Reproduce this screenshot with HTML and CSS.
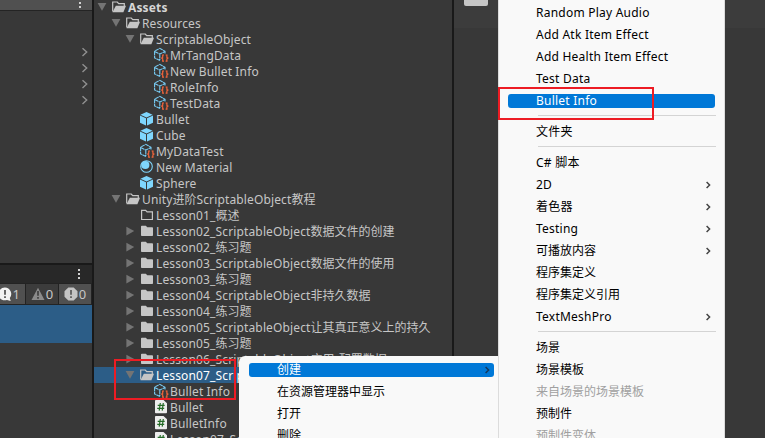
FILE: index.html
```
<!DOCTYPE html>
<html lang="zh-CN">
<head>
<meta charset="utf-8">
<title>Unity</title>
<link rel="stylesheet" href="styles.css">
</head>
<body>
<svg class="defs" aria-hidden="true">
  <symbol id="open" viewBox="0 0 16 16"><path d="M1.7 12.5V3h4.6l1.4 1.7h5.6V7" fill="none" stroke="currentColor" stroke-width="1.2"/><path d="M1.5 13.2 4.8 6.8H15l-2.6 6.4z" fill="currentColor"/></symbol>
  <symbol id="folder" viewBox="0 0 16 16"><path d="M2 3.5q0-.8.8-.8h4l1.5 1.6h4.9q.8 0 .8.8v7.1q0 .8-.8.8H2.8q-.8 0-.8-.8z" fill="currentColor"/></symbol>
  <symbol id="empty" viewBox="0 0 16 16"><path d="M2.6 3.3h4l1.5 1.6h5.3v7.6H2.6z" fill="none" stroke="currentColor" stroke-width="1.2"/></symbol>
  <symbol id="asset" viewBox="0 0 16 16"><path d="M7 13.4 1.6 11V4.2L6.8 1.3 12 4.2V7M1.6 4.4l5.2 2.7L12 4.4M6.8 7.1v6" fill="none" stroke="#78cbf3" stroke-width="1.1" stroke-dasharray="4 .5"/><path d="M11 8H9.7v2.4L8.7 11l1 .7v2.5H11M12.6 8h1.3v2.4l1 .6-1 .7v2.5h-1.3" fill="none" stroke="#f4653b" stroke-width="1.2"/></symbol>
  <symbol id="cube" viewBox="0 0 16 16"><path d="m7.5 1 6.1 2.7-6.1 2.8-6.1-2.8zM1 4.6l6 2.7v7.2l-6-2.8zM14 4.6 8 7.3v7.2l6-2.8z" fill="#7fd6fd"/></symbol>
  <symbol id="ball" viewBox="0 0 16 16"><circle cx="7.5" cy="7.5" r="5.8" fill="none" stroke="#7fd6fd" stroke-width="1.1"/><circle cx="6.3" cy="6" r="4.1" fill="#7fd6fd"/></symbol>
  <symbol id="script" viewBox="0 0 16 16"><path d="M2.8 1h7.7L14 4.3v9q0 .9-.9.9H2.8q-.8 0-.8-.9V1.9q0-.9.8-.9z" fill="#ededed"/><path d="M7.3 4 6.2 11.6M10.3 4 9.2 11.6M4.7 6.3h7M4.2 9.3h7" stroke="#246b27" stroke-width="1.2"/></symbol>
  <symbol id="down" viewBox="0 0 10 10"><path d="M.6 1h8.8L5 8.8z" fill="currentColor"/></symbol>
  <symbol id="right" viewBox="0 0 10 10"><path d="M1.4.8v8.6L9.2 5.1z" fill="currentColor"/></symbol>
  <symbol id="chev" viewBox="0 0 8 10"><path d="m1.5 1.2 4.2 3.9-4.2 3.9" fill="none" stroke="currentColor" stroke-width="1.4"/></symbol>
  <symbol id="more" viewBox="0 0 8 10"><path d="M2.6 2 5.6 5 2.6 8" fill="none" stroke="currentColor" stroke-width="1.5"/></symbol>
</svg>
<div class="app">
  <aside class="side">
    <div class="side-head"><i class="dots"></i></div>
    <div class="inspector">
      <svg><use href="#chev"/></svg><svg><use href="#chev"/></svg><svg><use href="#chev"/></svg><svg><use href="#chev"/></svg>
    </div>
    <div class="console-head"><i class="dots"></i></div>
    <div class="console-bar">
      <span class="on first"><svg viewBox="0 0 14 14"><path d="M7 .5a6.4 6.4 0 1 0 2 12.4l3.7 1-.9-3A6.4 6.4 0 0 0 7 .5z" fill="#f2f2f2"/><path d="M7 3v4.8M7 9.2V11" stroke="#444" stroke-width="1.6"/></svg>1</span>
      <span><svg viewBox="0 0 14 14"><path d="M7 .8 13.5 13H.5z" fill="#8b8b8b"/><path d="M7 4v4.7M7 10v1.7" stroke="#3c3c3c" stroke-width="1.6"/></svg>0</span>
      <span class="on"><svg viewBox="0 0 14 14"><path d="M4.3.5h5.4l3.8 3.8v5.4l-3.8 3.8H4.3L.5 9.7V4.3z" fill="#c4c4c4"/><path d="M7 3v4.8M7 9.2V11" stroke="#505050" stroke-width="1.6"/></svg>0</span>
    </div>
    <div class="log"></div>
  </aside>
  <main class="tree">
    <div class="row d0 bold"><svg class="arr"><use href="#down"/></svg><svg class="ico"><use href="#open"/></svg><span>Assets</span></div>
    <div class="row d1"><svg class="arr"><use href="#down"/></svg><svg class="ico"><use href="#open"/></svg><span>Resources</span></div>
    <div class="row d2"><svg class="arr"><use href="#down"/></svg><svg class="ico"><use href="#open"/></svg><span>ScriptableObject</span></div>
    <div class="row d3"><i class="arr"></i><svg class="ico"><use href="#asset"/></svg><span>MrTangData</span></div>
    <div class="row d3"><i class="arr"></i><svg class="ico"><use href="#asset"/></svg><span>New Bullet Info</span></div>
    <div class="row d3"><i class="arr"></i><svg class="ico"><use href="#asset"/></svg><span>RoleInfo</span></div>
    <div class="row d3"><i class="arr"></i><svg class="ico"><use href="#asset"/></svg><span>TestData</span></div>
    <div class="row d2"><i class="arr"></i><svg class="ico"><use href="#cube"/></svg><span>Bullet</span></div>
    <div class="row d2"><i class="arr"></i><svg class="ico"><use href="#cube"/></svg><span>Cube</span></div>
    <div class="row d2"><i class="arr"></i><svg class="ico"><use href="#asset"/></svg><span>MyDataTest</span></div>
    <div class="row d2"><i class="arr"></i><svg class="ico"><use href="#ball"/></svg><span>New Material</span></div>
    <div class="row d2"><i class="arr"></i><svg class="ico"><use href="#cube"/></svg><span>Sphere</span></div>
    <div class="row d1"><svg class="arr"><use href="#down"/></svg><svg class="ico"><use href="#open"/></svg><span>Unity<b>进阶</b>ScriptableObject<b>教程</b></span></div>
    <div class="row d2"><i class="arr"></i><svg class="ico"><use href="#empty"/></svg><span>Lesson01_<b>概述</b></span></div>
    <div class="row d2"><svg class="arr"><use href="#right"/></svg><svg class="ico"><use href="#folder"/></svg><span>Lesson02_ScriptableObject<b>数据文件的创建</b></span></div>
    <div class="row d2"><svg class="arr"><use href="#right"/></svg><svg class="ico"><use href="#folder"/></svg><span>Lesson02_<b>练习题</b></span></div>
    <div class="row d2"><svg class="arr"><use href="#right"/></svg><svg class="ico"><use href="#folder"/></svg><span>Lesson03_ScriptableObject<b>数据文件的使用</b></span></div>
    <div class="row d2"><svg class="arr"><use href="#right"/></svg><svg class="ico"><use href="#folder"/></svg><span>Lesson03_<b>练习题</b></span></div>
    <div class="row d2"><svg class="arr"><use href="#right"/></svg><svg class="ico"><use href="#folder"/></svg><span>Lesson04_ScriptableObject<b>非持久数据</b></span></div>
    <div class="row d2"><svg class="arr"><use href="#right"/></svg><svg class="ico"><use href="#folder"/></svg><span>Lesson04_<b>练习题</b></span></div>
    <div class="row d2"><svg class="arr"><use href="#right"/></svg><svg class="ico"><use href="#folder"/></svg><span>Lesson05_ScriptableObject<b>让其真正意义上的持久</b></span></div>
    <div class="row d2"><svg class="arr"><use href="#right"/></svg><svg class="ico"><use href="#folder"/></svg><span>Lesson05_<b>练习题</b></span></div>
    <div class="row d2"><svg class="arr"><use href="#right"/></svg><svg class="ico"><use href="#folder"/></svg><span>Lesson06_ScriptableObject<b>应用</b>-<b>配置数据</b></span></div>
    <div class="row d2 sel"><svg class="arr"><use href="#down"/></svg><svg class="ico"><use href="#open"/></svg><span>Lesson07_Scrip</span></div>
    <div class="row d3"><i class="arr"></i><svg class="ico"><use href="#asset"/></svg><span>Bullet Info</span></div>
    <div class="row d3"><i class="arr"></i><svg class="ico"><use href="#script"/></svg><span>Bullet</span></div>
    <div class="row d3"><i class="arr"></i><svg class="ico"><use href="#script"/></svg><span>BulletInfo</span></div>
    <div class="row d3"><i class="arr"></i><svg class="ico"><use href="#script"/></svg><span>Lesson07_Scr</span></div>
  </main>
  <section class="view"><div class="view-head"><i class="chip"></i></div></section>
</div>
<div class="menu context">
  <div class="item hot">创建<svg><use href="#more"/></svg></div>
  <div class="item">在资源管理器中显示</div>
  <div class="item">打开</div>
  <div class="item">删除</div>
</div>
<div class="menu submenu">
  <div class="item">Random Play Audio</div>
  <div class="item">Add Atk Item Effect</div>
  <div class="item">Add Health Item Effect</div>
  <div class="item">Test Data</div>
  <div class="item hot">Bullet Info</div>
  <hr>
  <div class="item">文件夹</div>
  <hr>
  <div class="item">C# 脚本</div>
  <div class="item">2D<svg><use href="#more"/></svg></div>
  <div class="item">着色器<svg><use href="#more"/></svg></div>
  <div class="item">Testing<svg><use href="#more"/></svg></div>
  <div class="item cjk">可播放内容<svg><use href="#more"/></svg></div>
  <div class="item cjk">程序集定义</div>
  <div class="item cjk">程序集定义引用</div>
  <div class="item">TextMeshPro<svg><use href="#more"/></svg></div>
  <hr>
  <div class="item cjk">场景</div>
  <div class="item cjk">场景模板</div>
  <div class="item cjk off">来自场景的场景模板</div>
  <div class="item cjk">预制件</div>
  <div class="item cjk off">预制件变体</div>
</div>
<div class="mark mark-file"></div>
<div class="mark mark-menu"></div>
</body>
</html>
```
FILE: styles.css
```
* { box-sizing: border-box; }
body {
  margin: 0;
  width: 765px;
  height: 438px;
  overflow: hidden;
  position: relative;
  background: #383838;
  color: #c6c6c6;
  font: 12px/16px "Noto Sans", "Noto Sans CJK SC", sans-serif;
}
.defs { display: none; }
.app { display: flex; height: 438px; }

.side {
  width: 94px;
  flex: none;
  border-right: 2px solid #191919;
  display: flex;
  flex-direction: column;
}
.side-head { height: 11px; flex: none; background: #505050; border-bottom: 1px solid #242424; padding-left: 79px; }
.dots {
  display: block;
  width: 2px;
  height: 10px;
  background: linear-gradient(#d0d0d0 2px, transparent 2px 4px, #d0d0d0 4px 6px, transparent 6px 8px, #d0d0d0 8px);
}
.side-head .dots { margin-top: -2px; }
.inspector { height: 252px; flex: none; padding: 36px 3px 0 0; display: flex; flex-direction: column; align-items: flex-end; gap: 6px; color: #909090; }
.inspector svg { width: 8px; height: 10px; }
.console-head { height: 20px; flex: none; border-top: 2px solid #191919; background: #282828; padding: 4px 0 0 78px; }
.console-bar { height: 22px; flex: none; display: flex; gap: 1px; padding: 1px 1px 1px 0; background: #232323; }
.console-bar span { width: 32px; background: #3c3c3c; display: flex; align-items: center; justify-content: center; gap: 1px; font-size: 13px; }
.console-bar .on { background: #505050; }
.console-bar .first { width: 25px; justify-content: flex-end; padding-right: 5px; }
.console-bar svg { width: 14px; height: 14px; flex: none; }
.log { height: 38px; background: #2c5d87; }

.tree { width: 360px; flex: none; margin-top: -1px; border-right: 2px solid #191919; overflow: hidden; }
.row { height: 16px; display: flex; align-items: center; white-space: nowrap; }
.row b { font-weight: 400; letter-spacing: 0; }
.row span { margin-left: 2px; padding-top: 2px; letter-spacing: .14px; }
.arr { width: 10px; height: 10px; margin-right: 4px; flex: none; color: #747474; }
.ico { width: 16px; height: 16px; flex: none; margin-right: -1px; color: #c6c6c6; }
.d0 { padding-left: 3px; }
.d1 { padding-left: 17px; }
.d2 { padding-left: 31px; }
.d3 { padding-left: 45px; }
.bold { font-weight: 700; color: #d6d6d6; }
.sel { background: #2c5d87; color: #fff; }

.view { flex: 1; }
.view-head { height: 28px; background: #3c3c3c; padding-left: 10px; }
.chip { display: block; width: 24px; height: 6px; background: #c6c6c6; border-radius: 0 0 2px 2px; }

.menu { position: absolute; display: flex; flex-direction: column; background: #f9f9f9; }
.context { left: 239px; top: 356px; width: 260px; height: 82px; overflow: hidden; border-radius: 6px 0 0 0; padding: 3px 5px 0 10px; }
.submenu { left: 498px; top: 0; width: 227px; height: 438px; border: solid #dcdcdc; border-width: 0 1px; overflow: hidden; padding: 2px 9px 0; }
.item { height: 22px; flex: none; display: flex; align-items: center; justify-content: space-between; padding: 0 3px 0 28px; white-space: nowrap; color: #000; letter-spacing: .23px; }
.context .item, .cjk { letter-spacing: 0; }
.item svg { width: 8px; height: 10px; color: #444; }
.item.hot { height: 14px; margin: 4px 0; background: #0078d7; color: #fff; border-radius: 3px; }
.hot svg { color: #16395c; }
.item.off { color: #a0a0a0; }
hr { margin: 3px -1px 5px 30px; height: 1px; flex: none; border: 0; background: #d4d4d4; }

.mark { position: absolute; border: 2px solid #ed1c24; }
.mark-file { left: 114px; top: 359px; width: 122px; height: 41px; }
.mark-menu { left: 498px; top: 87px; width: 156px; height: 33px; }
```
